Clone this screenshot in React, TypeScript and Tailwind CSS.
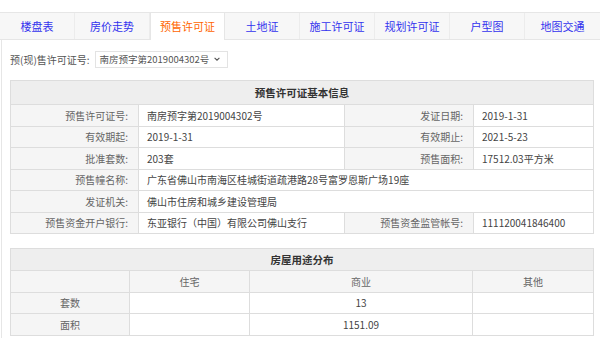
import React from "react";

const tabs = ["楼盘表", "房价走势", "预售许可证", "土地证", "施工许可证", "规划许可证", "户型图", "地图交通"];

const infoRows: [string, string, string?, string?][] = [
  ["预售许可证号:", "南房预字第2019004302号", "发证日期:", "2019-1-31"],
  ["有效期起:", "2019-1-31", "有效期止:", "2021-5-23"],
  ["批准套数:", "203套", "预售面积:", "17512.03平方米"],
  ["预售幢名称:", "广东省佛山市南海区桂城街道疏港路28号富罗恩斯广场19座"],
  ["发证机关:", "佛山市住房和城乡建设管理局"],
  ["预售资金开户银行:", "东亚银行（中国）有限公司佛山支行", "预售资金监管帐号:", "111120041846400"],
];

const font = { fontFamily: '"Noto Sans CJK SC", "Noto Sans", sans-serif' };

export default function App() {
  return (
    <div className="w-[600px] h-[338px] bg-white overflow-hidden pt-[12px]" style={font}>
      {/* Tabs */}
      <div className="flex h-[28px] bg-[#f7f7f7] border-y border-[#e6e6e6]">
        {tabs.map((t, i) => (
          <div
            key={t}
            className={
              i === 2
                ? "w-[75px] flex items-center justify-center text-[11px] text-[#ff6600] bg-white border-x border-[#e6e6e6] -mb-px"
                : "w-[75px] flex items-center justify-center text-[11px] text-[#3333ee] border-r border-[#ececec] last:border-r-0"
            }
          >
            {t}
          </div>
        ))}
      </div>

      <div className="ml-[1px] border-l border-[#e6e6e6] pl-[8px] h-full">
        {/* Select row */}
        <div className="flex items-center h-[37px] pt-[1px] text-[10px] text-[#555]">
          <span>预(现)售许可证号:</span>
          <div className="ml-[5px] h-[17px] w-[133px] border border-[#e3e3e3] flex items-center pl-[4px] gap-[3px] text-[9.5px]">
            <span>南房预字第2019004302号</span>
            <svg width="8" height="8" viewBox="0 0 10 10" className="ml-[1px]">
              <path d="M2 3.5 L5 6.5 L8 3.5" fill="none" stroke="#555" strokeWidth="1.4" />
            </svg>
          </div>
        </div>

        {/* Basic info table */}
        <table className="border-collapse w-[583px] table-fixed text-[10px] mt-[3px]">
          <colgroup>
            <col className="w-[128px]" />
            <col className="w-[206px]" />
            <col className="w-[129px]" />
            <col className="w-[120px]" />
          </colgroup>
          <tbody>
            <tr className="h-[24px]">
              <td colSpan={4} className="bg-[#eeeeee] border border-[#dddddd] text-center font-bold text-[10.5px] text-[#333]">
                预售许可证基本信息
              </td>
            </tr>
            {infoRows.map((r) => (
              <tr key={r[0]} className="h-[21.5px]">
                <td className="bg-[#f5f5f5] border border-[#dddddd] text-right pr-[10px] text-[#666]">{r[0]}</td>
                {r.length === 2 ? (
                  <td colSpan={3} className="border border-[#dddddd] pl-[8px] text-[#444]">{r[1]}</td>
                ) : (
                  <>
                    <td className="border border-[#dddddd] pl-[8px] text-[#444]">{r[1]}</td>
                    <td className="bg-[#f5f5f5] border border-[#dddddd] text-right pr-[10px] text-[#666]">{r[2]}</td>
                    <td className="border border-[#dddddd] pl-[8px] text-[#444]">{r[3]}</td>
                  </>
                )}
              </tr>
            ))}
          </tbody>
        </table>

        {/* Usage table */}
        <table className="border-collapse w-[583px] table-fixed text-[10px] mt-[14px] text-center">
          <colgroup>
            <col className="w-[119px]" />
            <col className="w-[120px]" />
            <col className="w-[223px]" />
            <col className="w-[121px]" />
          </colgroup>
          <tbody>
            <tr className="h-[22px]">
              <td colSpan={4} className="bg-[#eeeeee] border border-[#dddddd] font-bold text-[10.5px] text-[#333]">
                房屋用途分布
              </td>
            </tr>
            <tr className="h-[21.5px] bg-[#f5f5f5] text-[#666]">
              <td className="border border-[#dddddd]"></td>
              <td className="border border-[#dddddd]">住宅</td>
              <td className="border border-[#dddddd]">商业</td>
              <td className="border border-[#dddddd]">其他</td>
            </tr>
            <tr className="h-[21.5px] text-[#444]">
              <td className="bg-[#f5f5f5] border border-[#dddddd] text-[#666]">套数</td>
              <td className="border border-[#dddddd]"></td>
              <td className="border border-[#dddddd]">13</td>
              <td className="border border-[#dddddd]"></td>
            </tr>
            <tr className="h-[21.5px] text-[#444]">
              <td className="bg-[#f5f5f5] border border-[#dddddd] text-[#666]">面积</td>
              <td className="border border-[#dddddd]"></td>
              <td className="border border-[#dddddd]">1151.09</td>
              <td className="border border-[#dddddd]"></td>
            </tr>
          </tbody>
        </table>
      </div>
    </div>
  );
}
